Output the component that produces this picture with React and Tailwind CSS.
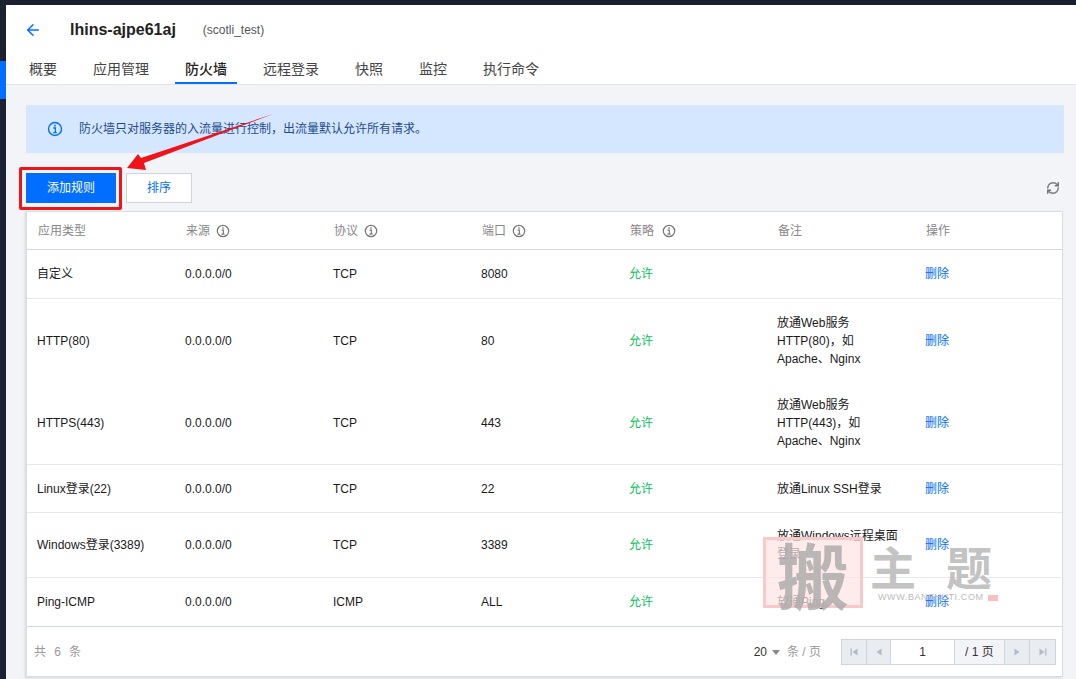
import React from 'react';
import { ArrowLeft, RefreshCw, ChevronDown } from 'lucide-react';

const rows = [
  { type: '自定义', proto: 'TCP', port: '8080', note: [], h: 'h-[49px]' },
  { type: 'HTTP(80)', proto: 'TCP', port: '80', note: ['放通Web服务', 'HTTP(80)，如', 'Apache、Nginx'], h: 'h-[83px]', noLine: true },
  { type: 'HTTPS(443)', proto: 'TCP', port: '443', note: ['放通Web服务', 'HTTP(443)，如', 'Apache、Nginx'], h: 'h-[83px]' },
  { type: 'Linux登录(22)', proto: 'TCP', port: '22', note: ['放通Linux SSH登录'], h: 'h-[48px]' },
  { type: 'Windows登录(3389)', proto: 'TCP', port: '3389', note: ['放通Windows远程桌面', '登录'], h: 'h-[65px]' },
  { type: 'Ping-ICMP', proto: 'ICMP', port: 'ALL', note: ['放通Ping'], h: 'h-[48px]', noLine: true },
];

const tabs = ['概要', '应用管理', '防火墙', '远程登录', '快照', '监控', '执行命令'];

const gridCols = 'grid grid-cols-[148px_148px_148px_148px_148px_148px_1fr] items-center';

const InfoIcon = ({ className }) => (
  <svg viewBox="0 0 16 16" className={className} fill="none" stroke="currentColor">
    <circle cx="8" cy="8" r="6.5" strokeWidth="1.4" />
    <rect x="7.2" y="3.8" width="1.6" height="1.7" fill="currentColor" stroke="none" />
    <path d="M6.4 7h2v4.4M6.2 11.6h3.6" strokeWidth="1.3" />
  </svg>
);

const HeadCell = ({ label, info, gap = 'ml-1.5' }) => (
  <div className="flex items-center pl-[11px] text-[12px] text-[#888]">
    {label}
    {info && <InfoIcon className={`w-[14px] h-[14px] text-[#777] ${gap}`} />}
  </div>
);

const PagerBtn = ({ d }) => (
  <div className="w-[25px] h-full flex items-center justify-center bg-[#e9ecf1] border-r border-[#cfd5de] last:border-r-0">
    <svg viewBox="0 0 10 10" className="w-[10px] h-[10px] text-[#b5bbc5]" fill="currentColor"><path d={d} /></svg>
  </div>
);

export default function App() {
  return (
    <div
      className="relative h-[679px] w-[1076px] overflow-hidden bg-[#1a2130] text-[12px] text-[#1a1a1a]"
      style={{ fontFamily: '"Liberation Sans", "Noto Sans CJK SC", sans-serif' }}
    >
      <div className="absolute left-0 top-[61px] h-[38px] w-[6px] bg-[#006eff]" />

      <div className="ml-[6px] mt-[5px] h-[674px] bg-[#f2f4f8]">
        {/* Header */}
        <header className="h-[80px] bg-white border-b border-[#e3e6eb] pl-[14px]">
          <div className="flex items-center h-[50px]">
            <ArrowLeft className="w-[18px] h-[18px] text-[#006eff] ml-[4px]" strokeWidth={2} />
            <span className="ml-[28px] text-[16px] font-bold text-[#222]">lhins-ajpe61aj</span>
            <span className="ml-[27px] text-[12px] text-[#555]">(scotli_test)</span>
          </div>
          <nav className="flex h-[29px] pl-[5px] gap-[28px]">
            {tabs.map((t, i) => (
              <div
                key={t}
                className={`relative w-auto flex items-center text-[14px] ${i === 2 ? 'text-[#222] font-medium' : 'text-[#444]'}`}
              >
                <span className="mx-[4px]">{t}</span>
                {i === 2 && <div className="absolute -left-[6px] -right-[6px] bottom-0 h-[2px] bg-[#006eff]" />}
              </div>
            ))}
          </nav>
        </header>

        <div className="pl-[20px] pr-[12px]">
          {/* Tip banner */}
          <div className="mt-[20px] h-[48px] bg-[#d5e7ff] flex items-center pl-[21px] text-[#1e4b8e]">
            <InfoIcon className="w-[16px] h-[16px] text-[#006eff]" />
            <span className="ml-[16px]">防火墙只对服务器的入流量进行控制，出流量默认允许所有请求。</span>
          </div>

          {/* Toolbar */}
          <div className="mt-[20px] h-[30px] flex items-center">
            <button className="w-[90px] h-[30px] bg-[#006eff] text-white text-[12px]">添加规则</button>
            <button className="ml-[10px] w-[66px] h-[30px] bg-white border border-[#cfd5de] text-[#006eff] text-[12px]">排序</button>
            <RefreshCw className="ml-auto mr-[4px] w-[14px] h-[14px] text-[#777]" strokeWidth={2.5} />
          </div>

          {/* Table */}
          <div className="mt-[8px] h-[466px] mr-[1px] bg-white border border-[#d9dde4] shadow-[-1px_1px_2px_rgba(0,0,0,0.12)]">
            <div className={`${gridCols} h-[38px] border-b border-[#d5d8e2]`}>
              <HeadCell label="应用类型" />
              <HeadCell label="来源" info />
              <HeadCell label="协议" info />
              <HeadCell label="端口" info />
              <HeadCell label="策略" info gap="ml-[8px]" />
              <HeadCell label="备注" />
              <HeadCell label="操作" />
            </div>

            {rows.map((r) => (
              <div key={r.type} className={`${gridCols} ${r.h} ${r.noLine ? '' : 'border-b border-[#e6e8ec]'}`}>
                <div className="pl-[10px]">{r.type}</div>
                <div className="pl-[10px]">0.0.0.0/0</div>
                <div className="pl-[10px]">{r.proto}</div>
                <div className="pl-[10px]">{r.port}</div>
                <div className="pl-[10px] text-[#0abf5b]">允许</div>
                <div className="pl-[10px] leading-[18px]">
                  {r.note.map((n) => <div key={n}>{n}</div>)}
                </div>
                <div className="pl-[10px] text-[#006eff]">删除</div>
              </div>
            ))}

            {/* Pagination */}
            <div className="h-[50px] border-t border-[#d5d8e2] flex items-center pl-[7px] pr-[6px] text-[#999]">
              <span className="tracking-[0.5px]">共&nbsp;&nbsp;6&nbsp;&nbsp;条</span>
              <span className="ml-auto text-[#333]">20</span>
              <ChevronDown className="hidden" />
              <span className="ml-[5px] w-0 h-0 border-x-[4px] border-x-transparent border-t-[5px] border-t-[#888] mt-[1px]" />
              <span className="ml-[7px]">条 / 页</span>
              <div className="ml-[20px] flex h-[26px] w-[215px] border border-[#cfd5de] text-[#333]">
                <PagerBtn d="M1.5 1.5h1.4v7H1.500zM8.500 1.500v7L3.500 5z" />
                <PagerBtn d="M7.500 1.500v7L2.500 5z" />
                <div className="w-[64px] h-full bg-white flex items-center justify-center border-r border-[#cfd5de]">1</div>
                <div className="w-[50px] h-full bg-[#f2f4f8] flex items-center justify-center">/ 1 页</div>
                <div className="flex-1 flex border-l border-[#cfd5de]">
                  <PagerBtn d="M2.500 1.500v7L7.500 5z" />
                  <PagerBtn d="M7.100 1.500h1.400v7H7.100zM1.500 1.500v7L6.500 5z" />
                </div>
              </div>
            </div>
          </div>
        </div>
      </div>

      {/* Red annotation */}
      <div className="absolute left-[19px] top-[167px] w-[103px] h-[43px] border-[3px] border-[#f0141a] rounded-[2px] pointer-events-none" />
      <svg className="absolute inset-0 w-full h-full pointer-events-none" viewBox="0 0 1076 679">
        <polygon points="273,114 144,163 146,170 127,168 138,154 141,158" fill="#f0141a" />
      </svg>

      {/* Watermark */}
      <div className="absolute left-[763px] top-[537px] w-[100px] h-[71px] border-[3px] border-[#f9c9c9] bg-[#fde3e3]/70 flex items-center justify-center pointer-events-none overflow-visible">
        <span className="text-[72px] leading-none font-bold text-[#a9a9a9]/80" style={{ fontFamily: '"Noto Sans CJK SC", serif' }}>搬</span>
      </div>
      <div className="absolute left-[870px] top-[540px] w-[122px] flex justify-between text-[46px] leading-[50px] text-[#bbb]/90 font-bold pointer-events-none" style={{ fontFamily: '"Noto Sans CJK SC", serif' }}>
        <span>主</span><span>题</span>
      </div>
      <div className="absolute left-[878px] top-[591px] flex items-center text-[9px] tracking-[0.6px] text-[#bbb] pointer-events-none">
        WWW.BANZHUTI.COM
        <span className="ml-[4px] w-[10px] h-[6px] bg-[#f9c0c0]" />
      </div>
    </div>
  );
}
